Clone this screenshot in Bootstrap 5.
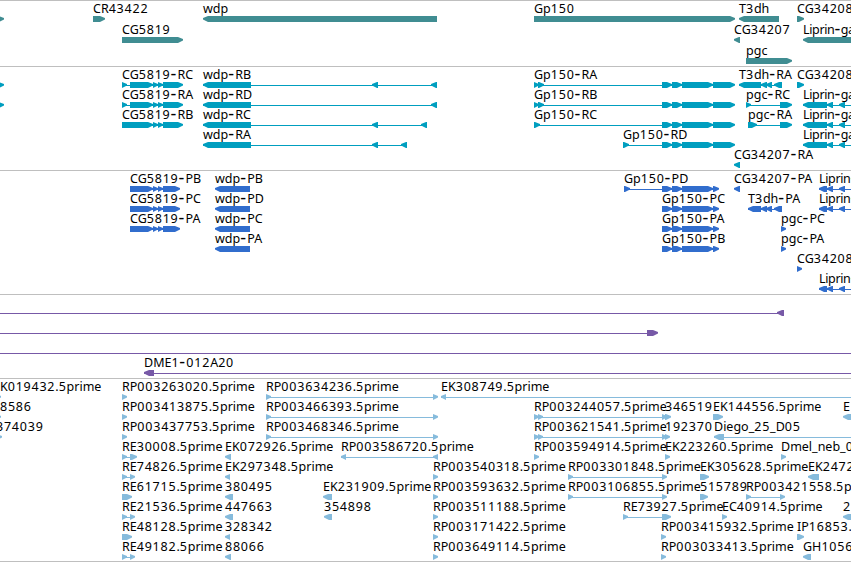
<!DOCTYPE html>
<html lang="en">
<head>
    <meta charset="UTF-8">
    <title>Genome Tracks</title>
    <link href="https://cdn.jsdelivr.net/npm/bootstrap@5.3.2/dist/css/bootstrap.min.css" rel="stylesheet">
    <style>
        body {
            font-family: "Noto Sans", "DejaVu Sans", sans-serif;
            font-size: 12.5px;
            color: #000;
        }

        .browser {
            width: 851px;
            height: 562px;
            border-bottom: 1px solid #bfbfbf;
        }

        .track {
            border-top: 1px solid #bfbfbf;
        }

        .track text {
            fill: #000;
        }

        /* Digits and hyphens are set wider than the letters */
        .track .digits { letter-spacing: 0.78px; }
        .track .hyphen { font-size: 18px; letter-spacing: 1.2px; }
        .track .tight { letter-spacing: -0.35px; }
        .track .tight .hyphen { letter-spacing: 0.4px; }

        /* Track heights and feature colours */
        #genes { height: 66px; color: #408d92; }
        #transcripts { height: 104px; color: #009ebf; }
        #proteins { height: 124px; color: #316dcd; }
        #bacs { height: 84px; color: #7759a7; }
        #ests { height: 183px; color: #86bbdc; }
    </style>
</head>
<body class="bg-white overflow-hidden">

<main class="browser d-flex flex-column overflow-hidden">
    <section class="track flex-shrink-0 overflow-hidden" id="genes"></section>
    <section class="track flex-shrink-0 overflow-hidden" id="transcripts"></section>
    <section class="track flex-shrink-0 overflow-hidden" id="proteins"></section>
    <section class="track flex-shrink-0 overflow-hidden" id="bacs"></section>
    <section class="track flex-shrink-0 overflow-hidden" id="ests"></section>
</main>

<script src="https://cdn.jsdelivr.net/npm/bootstrap@5.3.2/dist/js/bootstrap.bundle.min.js"></script>
<script>
    // Shared exon groups
    const gpExons = [662, 672, 672, 682, 682, 713, 713, 735];
    const gpCds = [662, 672, 672, 682, 682, 713, 713, 719];
    const cgExons = [153, 158, 158, 163, 163, 183];
    const cgCds = [130, 153, 153, 158, 158, 163, 163, 180];
    const liprin = [827, 833, 839, 845, 860, 870];

    // Feature: [row, strand, label, [start, end, start, end, ...], label x (optional)]
    const tracks = {
        genes: [
            [0, '>', '', [-10, 4]],
            [0, '>', 'CR43422', [93, 105]],
            [0, '<', 'wdp', [203, 437]],
            [0, '>', 'Gp150', [534, 735]],
            [0, '<', 'T3dh', [739, 779]],
            [0, '>', 'CG34208', [797, 804]],
            [1, '>', 'CG5819', [122, 183]],
            [1, '<', 'CG34207', [734, 740]],
            [1, '<', 'Liprin-gamma', [803, 870]],
            [2, '>', 'pgc', [746, 792]]
        ],
        transcripts: [
            [0, '>', '', [-10, 4]],
            [1, '>', '', [-10, 4]],
            [0, '>', 'CG5819-RC', [122, 127, 130, 153, ...cgExons]],
            [1, '>', 'CG5819-RA', [122, 127, 130, 153, ...cgExons]],
            [2, '>', 'CG5819-RB', [122, 153, ...cgExons]],
            [0, '<', 'wdp-RB', [203, 251, 372, 378, 431, 437]],
            [1, '<', 'wdp-RD', [203, 251, 431, 437]],
            [2, '<', 'wdp-RC', [203, 251, 372, 378, 421, 427]],
            [3, '<', 'wdp-RA', [203, 251, 372, 378, 401, 407]],
            [0, '>', 'Gp150-RA', [534, 539, 538, 544, ...gpExons]],
            [1, '>', 'Gp150-RB', [534, 539, 538, 544, ...gpExons]],
            [2, '>', 'Gp150-RC', [534, 540, ...gpExons]],
            [3, '>', 'Gp150-RD', [623, 629, ...gpExons]],
            [0, '<', 'T3dh-RA', [739, 761, 761, 767, 766, 772, 774, 782]],
            [0, '>', 'CG34208-RA', [797, 804]],
            [1, '>', 'pgc-RC', [746, 751, 780, 792]],
            [2, '>', 'pgc-RA', [748, 757, 780, 792]],
            [1, '<', 'Liprin-gamma-RB', [803, 827, ...liprin]],
            [2, '<', 'Liprin-gamma-RC', [803, 827, ...liprin]],
            [3, '<', 'Liprin-gamma-RA', [803, 827, ...liprin]],
            [4, '<', 'CG34207-RA', [734, 740]]
        ],
        proteins: [
            [0, '>', 'CG5819-PB', cgCds],
            [1, '>', 'CG5819-PC', cgCds],
            [2, '>', 'CG5819-PA', cgCds],
            [0, '<', 'wdp-PB', [215, 250]],
            [1, '<', 'wdp-PD', [215, 250]],
            [2, '<', 'wdp-PC', [215, 250]],
            [3, '<', 'wdp-PA', [215, 250]],
            [0, '>', 'Gp150-PD', [624, 630, ...gpCds]],
            [1, '>', 'Gp150-PC', gpCds],
            [2, '>', 'Gp150-PA', gpCds],
            [3, '>', 'Gp150-PB', gpCds],
            [0, '<', 'CG34207-PA', [734, 740]],
            [1, '<', 'T3dh-PA', [748, 761, 761, 767, 766, 772, 774, 782]],
            [2, '>', 'pgc-PC', [781, 786]],
            [3, '>', 'pgc-PA', [781, 786]],
            [4, '>', 'CG34208-PA', [797, 802]],
            [0, '<', 'Liprin-gamma-PB', [819, 827, ...liprin]],
            [1, '<', 'Liprin-gamma-PC', [819, 827, ...liprin]],
            [5, '<', 'Liprin-gamma-PA', [819, 827, ...liprin]]
        ],
        bacs: [
            [0, '<', '', [-20, -10, 777, 784]],
            [1, '>', '', [-20, -10, 647, 658]],
            [2, '>', '', [-20, -10, 860, 870]],
            [3, '<', 'DME1-012A20', [144, 154, 860, 870]]
        ],
        ests: [
            [0, '>', 'EK019432.5prime', [-6, 1], -7],
            [1, '>', '8586', [-6, 1], 0],
            [2, '>', '374039', [-6, 2], -4],
            [0, '>', 'RP003263020.5prime', [122, 127]],
            [1, '>', 'RP003413875.5prime', [122, 127]],
            [2, '>', 'RP003437753.5prime', [122, 127]],
            [3, '>', 'RE30008.5prime', [122, 127, 130, 137]],
            [4, '>', 'RE74826.5prime', [122, 127, 130, 135]],
            [5, '>', 'RE61715.5prime', [122, 132]],
            [6, '>', 'RE21536.5prime', [122, 127, 130, 135]],
            [7, '>', 'RE48128.5prime', [122, 132]],
            [8, '>', 'RE49182.5prime', [122, 127, 130, 135]],
            [3, '<', 'EK072926.5prime', [225, 231]],
            [4, '<', 'EK297348.5prime', [225, 230]],
            [5, '<', '380495', [225, 233]],
            [6, '<', '447663', [225, 233]],
            [7, '<', '328342', [225, 230]],
            [8, '<', '88066', [225, 231]],
            [0, '>', 'RP003634236.5prime', [266, 271, 433, 438]],
            [1, '>', 'RP003466393.5prime', [266, 271, 433, 438]],
            [2, '>', 'RP003468346.5prime', [266, 271, 433, 438]],
            [0, '<', 'EK308749.5prime', [441, 446, 860, 870]],
            [3, '<', 'RP003586720.5prime', [341, 346, 433, 438]],
            [5, '<', 'EK231909.5prime', [323, 332]],
            [6, '<', '354898', [324, 332]],
            [4, '>', 'RP003540318.5prime', [433, 438]],
            [5, '>', 'RP003593632.5prime', [433, 438]],
            [6, '>', 'RP003511188.5prime', [433, 438]],
            [7, '>', 'RP003171422.5prime', [433, 438]],
            [8, '>', 'RP003649114.5prime', [433, 438]],
            [1, '>', 'RP003244057.5prime', [534, 539, 538, 543, 662, 667]],
            [2, '>', 'RP003621541.5prime', [534, 539, 538, 543, 662, 667]],
            [3, '>', 'RP003594914.5prime', [534, 539]],
            [1, '>', '346519', [665, 671]],
            [2, '>', '192370', [665, 670]],
            [3, '>', 'EK223260.5prime', [665, 670]],
            [1, '>', 'EK144556.5prime', [713, 723]],
            [2, '<', 'Diego_25_D05', [714, 724, 860, 870]],
            [3, '>', 'Dmel_neb_0', [781, 786]],
            [1, '<', 'E', [843, 870]],
            [4, '>', 'RP003301848.5prime', [568, 573, 662, 667]],
            [5, '>', 'RP003106855.5prime', [568, 573, 662, 667]],
            [4, '>', 'EK305628.5prime', [700, 709]],
            [5, '>', '515789', [700, 708]],
            [4, '<', 'EK2472', [808, 819]],
            [5, '>', 'RP003421558.5prime', [746, 751, 780, 785]],
            [6, '>', 'RE73927.5prime', [623, 628, 662, 671]],
            [6, '>', 'EC40914.5prime', [722, 727]],
            [6, '<', '2', [843, 870]],
            [7, '>', 'RP003415932.5prime', [661, 666]],
            [8, '>', 'RP003033413.5prime', [661, 666]],
            [7, '>', 'IP16853.5prime', [797, 804]],
            [8, '<', 'GH1056', [803, 811]]
        ]
    };

    // Box with a pointed end on the side the strand runs to
    function arrow(x1, x2, y, strand) {
        const head = 5;
        const points = strand === '>'
            ? [[x1, y], [x2 - head, y], [x2, y + 2], [x2, y + 3.5], [x2 - head, y + 6], [x1, y + 6]]
            : [[x2, y], [x1 + head, y], [x1, y + 2], [x1, y + 3.5], [x1 + head, y + 6], [x2, y + 6]];
        return `<polygon points="${points.map(p => p.join(',')).join(' ')}"/>`;
    }

    // The hyphen is larger than the rest, so lower it and come back up for what follows
    function labelMarkup(label) {
        return label
            .replace(/\d+|-[A-Za-z]*/g, part => part[0] === '-'
                ? `<tspan class="hyphen" dy="1.4">-</tspan><tspan dy="-1.4">${part.slice(1)}</tspan>`
                : `<tspan class="digits">${part}</tspan>`)
            .replace('<tspan dy="-1.4"></tspan><tspan class="digits">', '<tspan class="digits" dy="-1.4">');
    }

    function drawFeature([row, strand, label, spans, labelX], step) {
        const y = row * step;
        let out = '';
        if (spans.length > 2) {
            const from = spans[0];
            out += `<rect x="${from}" y="${y + 18}" width="${spans[spans.length - 1] - from - 1}" height="1"/>`;
        }
        for (let i = 0; i < spans.length; i += 2) {
            out += arrow(spans[i], spans[i + 1], y + 15, strand);
        }
        if (label) {
            const cls = label.startsWith('Liprin') ? ' class="tight"' : '';
            out += `<text x="${labelX ?? spans[0]}" y="${y + 12}"${cls}>${labelMarkup(label)}</text>`;
        }
        return out;
    }

    for (const [id, features] of Object.entries(tracks)) {
        const step = id === 'genes' ? 21 : 20;
        document.getElementById(id).innerHTML =
            `<svg class="d-block" width="851" height="183" fill="currentColor">${features.map(f => drawFeature(f, step)).join('')}</svg>`;
    }
</script>
</body>
</html>
